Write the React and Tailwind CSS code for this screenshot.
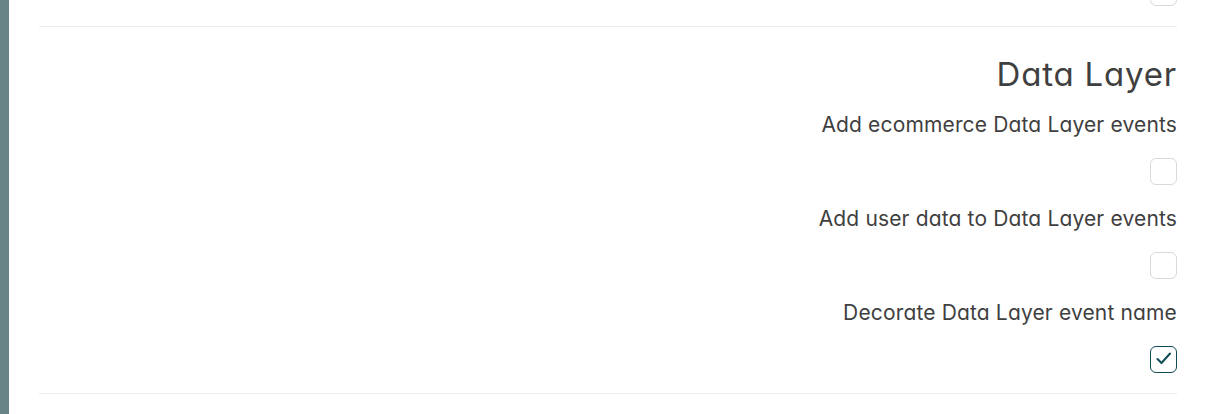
import React from "react";

function Box({ checked }) {
  return (
    <div
      className={
        "w-[27px] h-[27px] rounded-[6px] border bg-white " +
        (checked ? "border-[#0f4c55]" : "border-[#d9d9d9]")
      }
    >
      {checked && (
        <svg width="25" height="25" viewBox="0 0 25 25" fill="none" className="block">
          <path d="M6.5 12 L10.5 16 L19 6.5" stroke="#0f4c55" strokeWidth="2" strokeLinecap="round" strokeLinejoin="round" />
        </svg>
      )}
    </div>
  );
}

function Field({ label, checked }) {
  return (
    <div className="flex flex-col items-end pb-[20px]">
      <div className="text-[21px] leading-[28px] tracking-[0.15px] text-[#3f3f3f]">{label}</div>
      <div className="mt-[19px]">
        <Box checked={checked} />
      </div>
    </div>
  );
}

export default function App() {
  return (
    <div
      className="flex w-[1206px] h-[414px] overflow-hidden bg-white [font-feature-settings:'cv11']"
      style={{ fontFamily: "Inter, 'Noto Sans', sans-serif" }}
    >
      <div className="w-[9px] shrink-0 bg-[#688385]" />
      <div className="flex-1 pl-[30px] pr-[29px]">
        <div className="flex justify-end -mt-[21px]">
          <Box />
        </div>
        <div className="mt-[20px] border-t border-[#ebebeb]" />
        <div className="pt-[27px] flex flex-col items-end">
          <h2 className="text-[33px] leading-[40px] tracking-[0.8px] text-[#3f3f3f] mb-[17px]">Data Layer</h2>
          <div className="w-full">
            <Field label="Add ecommerce Data Layer events" />
            <Field label="Add user data to Data Layer events" />
            <Field label="Decorate Data Layer event name" checked />
          </div>
        </div>
        <div className="border-t border-[#ebebeb]" />
      </div>
    </div>
  );
}
